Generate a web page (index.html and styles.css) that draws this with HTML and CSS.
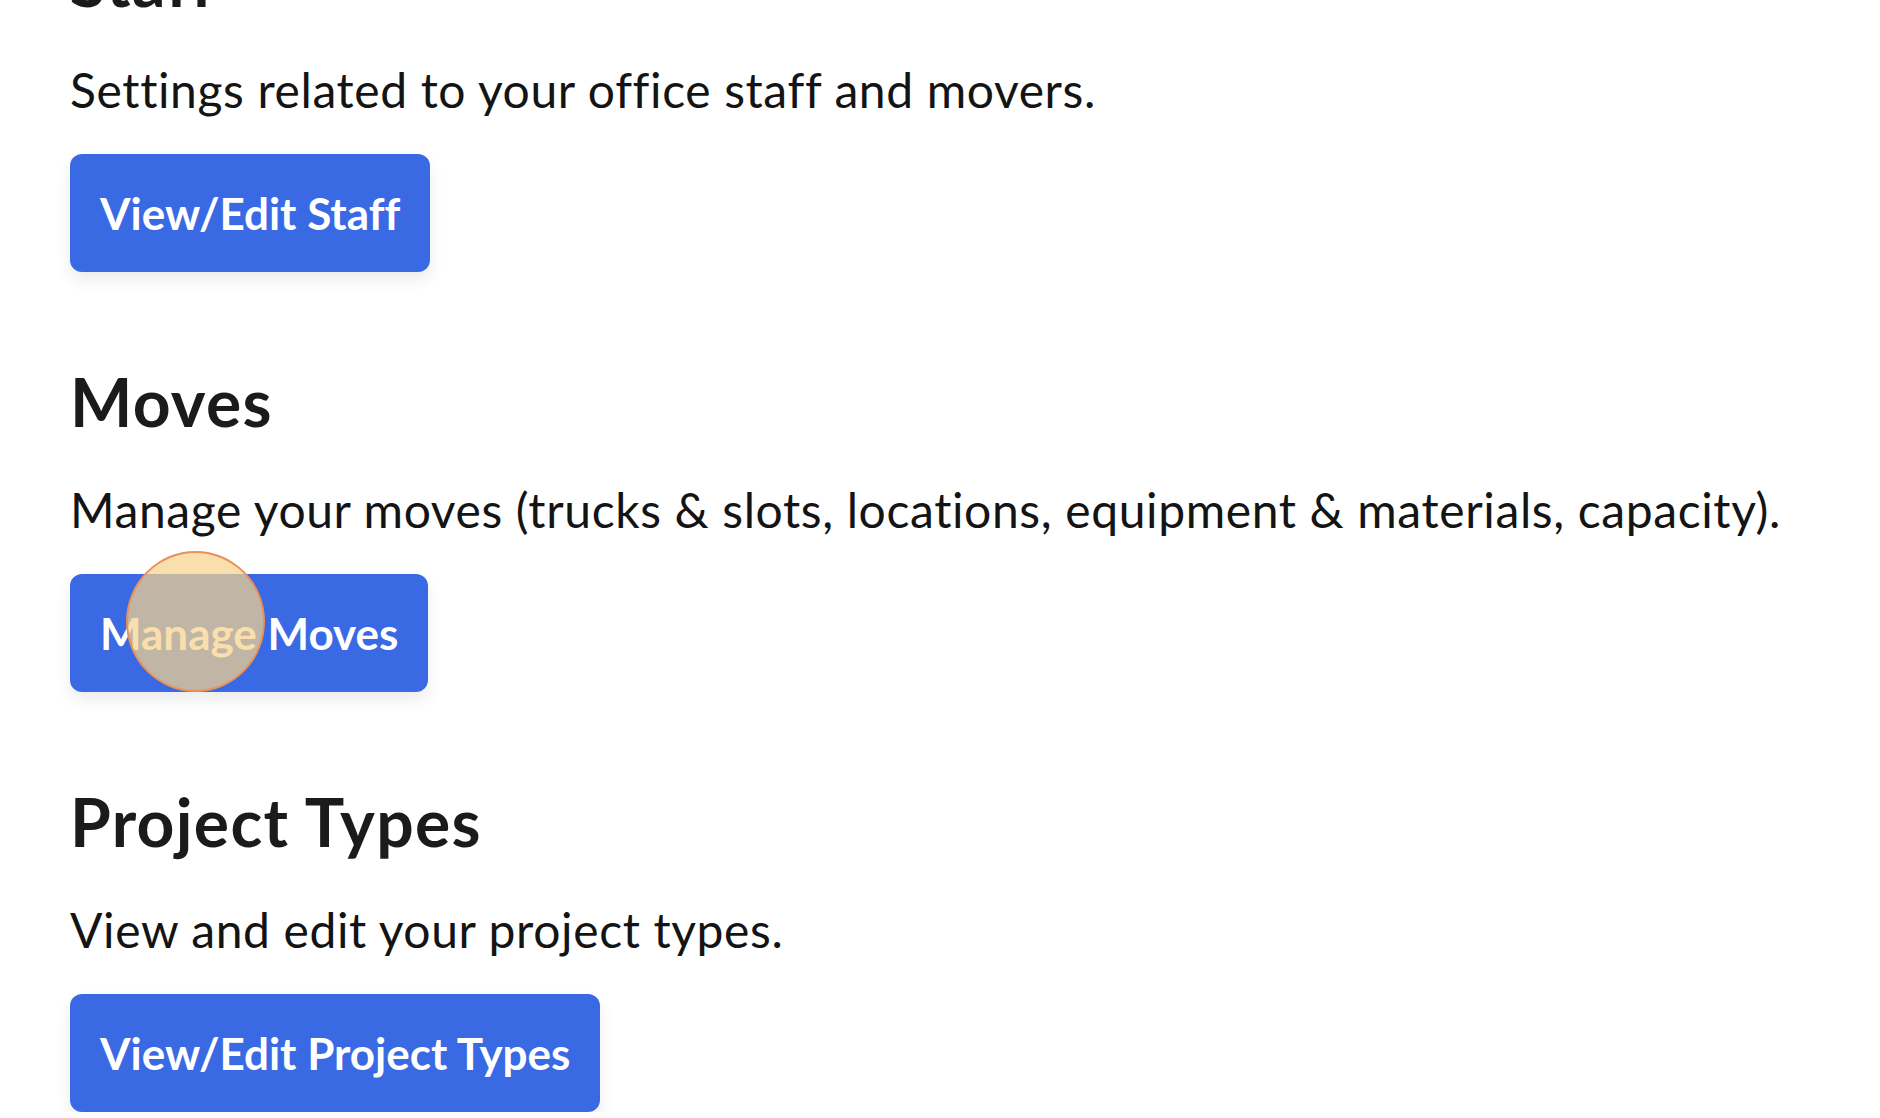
FILE: index.html
```html
<!DOCTYPE html>
<html lang="en">
<head>
<meta charset="utf-8">
<title>Settings</title>
<link rel="stylesheet" href="styles.css">
</head>
<body>
<main class="settings">
  <section class="block">
    <h2 class="block-title">Staff</h2>
    <p class="block-desc">Settings related to your office staff and movers.</p>
    <div class="block-action"><a class="btn" href="#">View/Edit Staff</a></div>
  </section>
  <section class="block">
    <h2 class="block-title">Moves</h2>
    <p class="block-desc">Manage your moves (trucks &amp; slots, locations, equipment &amp; materials, capacity).</p>
    <div class="block-action">
      <a class="btn" href="#">Manage Moves</a>
      <span class="click-ring" aria-hidden="true"></span>
    </div>
  </section>
  <section class="block">
    <h2 class="block-title">Project Types</h2>
    <p class="block-desc">View and edit your project types.</p>
    <div class="block-action"><a class="btn" href="#">View/Edit Project Types</a></div>
  </section>
</main>
</body>
</html>
```
FILE: styles.css
```css
html, body {
  margin: 0;
  padding: 0;
  background: #ffffff;
  overflow: hidden;
}
body {
  font-family: "Lato", "Liberation Sans", sans-serif;
  color: #161616;
  font-variant-ligatures: none;
}
.settings {
  margin-top: -58px;
  padding-left: 70px;
  display: flex;
  flex-direction: column;
  gap: 90px;
}
.block {
  display: flex;
  flex-direction: column;
  align-items: flex-start;
}
.block-title {
  margin: 0;
  font-size: 66px;
  line-height: 80px;
  font-weight: 700;
  letter-spacing: 1.3px;
  color: #1b1b1b;
}
.block-desc {
  margin: 39px 0 0;
  font-size: 48px;
  line-height: 58px;
  font-weight: 400;
  letter-spacing: 0.62px;
  color: #141414;
}
.block-action {
  position: relative;
  margin-top: 35px;
}
.btn {
  display: inline-flex;
  align-items: center;
  height: 118px;
  box-sizing: border-box;
  padding: 0 30px;
  border-radius: 12px;
  background: #3a69e4;
  color: #ffffff;
  font-size: 44px;
  font-weight: 700;
  text-decoration: none;
  box-shadow: 0 8px 16px rgba(0, 0, 0, 0.08);
}
.click-ring {
  position: absolute;
  left: 56px;
  top: -23px;
  width: 135px;
  height: 137px;
  border-radius: 50%;
  border: 2px solid #e8915a;
  background: rgba(245, 210, 140, 0.72);
  pointer-events: none;
}
```
